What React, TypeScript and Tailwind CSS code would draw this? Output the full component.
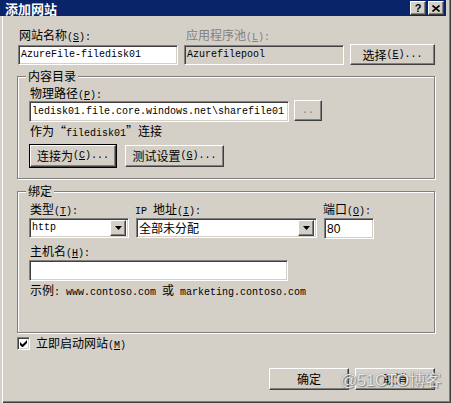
import type { ReactNode } from "react";

const raised =
  "bg-[#d4d0c8] border border-t-white border-l-white border-r-[#404040] border-b-[#404040] shadow-[inset_-1px_-1px_0_#808080]";
const sunken =
  "border border-t-[#808080] border-l-[#808080] border-r-white border-b-white shadow-[inset_1px_1px_0_#404040,inset_-1px_-1px_0_#d4d0c8]";
const etched =
  "relative border border-[#808080] shadow-[inset_1px_1px_0_#ffffff,1px_1px_0_#ffffff]";

function Lat({ children, className = "" }: { children: ReactNode; className?: string }) {
  return (
    <span className={"font-['Liberation_Mono',monospace] text-[10px] leading-[8px] " + className}>
      {children}
    </span>
  );
}

// label with an underlined access key, e.g. 网站名称(S):
function Acc({ text, k, tail = ":" }: { text: string; k: string; tail?: string }) {
  return (
    <span>
      {text}
      <Lat>
        (<span className="underline">{k}</span>){tail}
      </Lat>
    </span>
  );
}

function Field({
  w,
  h = "h-[20px]",
  disabled = false,
  children,
}: {
  w: string;
  h?: string;
  disabled?: boolean;
  children?: ReactNode;
}) {
  return (
    <div
      className={`${w} ${h} ${sunken} ${
        disabled ? "bg-[#d4d0c8]" : "bg-white"
      } flex items-center overflow-hidden whitespace-nowrap pl-[2px]`}
    >
      {children}
    </div>
  );
}

function Combo({ w, children }: { w: string; children: ReactNode }) {
  return (
    <div className={`${w} h-[20px] ${sunken} flex items-center bg-white pl-[2px] pr-[2px]`}>
      <div className="flex h-[16px] flex-1 items-center overflow-hidden whitespace-nowrap">
        {children}
      </div>
      <div className={`${raised} flex h-[16px] w-[16px] items-center justify-center`}>
        <svg width="7" height="4" viewBox="0 0 7 4">
          <path d="M0 0h7L3.5 4z" fill="#000" />
        </svg>
      </div>
    </div>
  );
}

function Button({
  w,
  children,
  isDefault = false,
}: {
  w: string;
  children: ReactNode;
  isDefault?: boolean;
}) {
  const inner = (
    <div className={`${w} h-[22px] ${raised} flex items-center justify-center whitespace-nowrap`}>
      {children}
    </div>
  );
  if (isDefault) return <div className="border border-black">{inner}</div>;
  return inner;
}

function Group({ title, h, children }: { title: string; h: string; children: ReactNode }) {
  return (
    <div className={`${etched} ${h} w-[418px]`}>
      <span className="absolute left-[8px] top-[-8px] h-[14px] bg-[#d4d0c8] px-[2px]">
        {title}
      </span>
      {children}
    </div>
  );
}

export default function App() {
  return (
    <div className="relative h-[403px] w-[451px] overflow-hidden bg-[#d4d0c8] font-['Noto_Sans_CJK_SC',sans-serif] text-[12px] leading-[14px] text-black shadow-[inset_2px_0_0_#d4d0c8,inset_3px_0_0_#ffffff,inset_-1px_-1px_0_#404040,inset_-2px_-2px_0_#808080]">
      {/* title bar */}
      <div className="flex h-[16px] w-[446px] items-center bg-[#0a246a] pl-[5px] pr-[2px]">
        <span className="flex-1 text-[13px] font-bold leading-[15px] text-white">添加网站</span>
        <div className={`${raised} flex h-[14px] w-[16px] items-center justify-center text-[11px] font-bold leading-none`}>
          <span className="font-['Liberation_Sans',sans-serif]">?</span>
        </div>
        <div className={`${raised} ml-[2px] flex h-[14px] w-[16px] items-center justify-center`}>
          <svg width="8" height="7" viewBox="0 0 8 7">
            <path d="M0.5 0.5l7 6M7.5 0.5l-7 6" stroke="#000" strokeWidth="1.6" />
          </svg>
        </div>
      </div>

      <div className="pl-[17px] pr-[16px]">
        {/* site name / app pool */}
        <div className="mt-[12px] flex h-[14px]">
          <div className="w-[167px] pl-[2px]">
            <Acc text="网站名称" k="S" />
          </div>
          <div className="pl-[2px] text-[#808080]">
            <Acc text="应用程序池" k="L" />
          </div>
        </div>
        <div className="mt-[2px] flex items-end">
          <div className="ml-[1px]">
            <Field w="w-[160px]">
              <Lat>AzureFile-filedisk01</Lat>
            </Field>
          </div>
          <div className="ml-[6px]">
            <Field w="w-[160px]" disabled>
              <Lat>Azurefilepool</Lat>
            </Field>
          </div>
          <div className="ml-[6px]">
            <div className={`${raised} flex h-[21px] w-[85px] items-center justify-center`}>
              选择<Lat>(<span className="underline">E</span>)...</Lat>
            </div>
          </div>
        </div>

        {/* content directory */}
        <div className="mt-[11px]">
          <Group title="内容目录" h="h-[103px]">
            <div className="pl-[11px] pt-[9px]">
              <div className="h-[14px] pl-[1px]">
                <Acc text="物理路径" k="P" />
              </div>
              <div className="mt-[1px] flex items-start">
                <Field w="w-[260px]" h="h-[21px]">
                  <Lat>ledisk01.file.core.windows.net\sharefile01</Lat>
                </Field>
                <div className="-mt-[1px] ml-[5px]">
                  <div className={`${raised} flex h-[21px] w-[28px] items-center justify-center text-[#808080]`}>
                    <Lat>..</Lat>
                  </div>
                </div>
              </div>
              <div className="mt-[2px] h-[14px] pl-[1px]">
                作为“<Lat>filedisk01</Lat>”连接
              </div>
              <div className="mt-[6px] flex items-center">
                <Button w="w-[86px]" isDefault>
                  连接为<Lat>(<span className="underline">C</span>)...</Lat>
                </Button>
                <div className="ml-[8px]">
                  <Button w="w-[99px]">
                    测试设置<Lat>(<span className="underline">G</span>)...</Lat>
                  </Button>
                </div>
              </div>
            </div>
          </Group>
        </div>

        {/* binding */}
        <div className="mt-[12px]">
          <Group title="绑定" h="h-[142px]">
            <div className="pl-[11px] pt-[10px]">
              <div className="flex h-[14px]">
                <div className="w-[106px] pl-[1px]">
                  <Acc text="类型" k="T" />
                </div>
                <div className="w-[188px]">
                  <Lat>IP </Lat>地址<Lat>(<span className="underline">I</span>):</Lat>
                </div>
                <div>
                  <Acc text="端口" k="O" />
                </div>
              </div>
              <div className="mt-[2px] flex">
                <Combo w="w-[100px]">
                  <Lat>http</Lat>
                </Combo>
                <div className="ml-[7px]">
                  <Combo w="w-[181px]">全部未分配</Combo>
                </div>
                <div className="ml-[7px]">
                  <Field w="w-[50px]" h="h-[21px]">
                    <span className="font-['Liberation_Sans',sans-serif] text-[12px]">80</span>
                  </Field>
                </div>
              </div>
              <div className="mt-[5px] h-[14px] pl-[1px]">
                <Acc text="主机名" k="H" />
              </div>
              <div className="mt-[2px]">
                <Field w="w-[259px]" h="h-[21px]" />
              </div>
              <div className="mt-[2px] h-[14px] pl-[1px]">
                示例<Lat>: www.contoso.com </Lat>或<Lat> marketing.contoso.com</Lat>
              </div>
            </div>
          </Group>
        </div>

        {/* start immediately */}
        <div className="mt-[3px] flex h-[14px] items-center">
          <div className={`${sunken} flex h-[13px] w-[13px] items-center justify-center bg-white`}>
            <svg width="7" height="7" viewBox="0 0 7 7">
              <path d="M0 2v3l2 2h1l4-4V0L2.5 4.5z" fill="#000" />
            </svg>
          </div>
          <span className="ml-[6px]">
            立即启动网站<Lat>(<span className="underline">M</span>)</Lat>
          </span>
        </div>

        {/* ok / cancel */}
        <div className="mt-[18px] flex justify-end gap-[6px]">
          <Button w="w-[80px]">确定</Button>
          <Button w="w-[80px]">取消</Button>
        </div>
      </div>

      <span className="pointer-events-none absolute left-[340px] top-[370px] whitespace-nowrap font-['Liberation_Sans',sans-serif] text-[17px] leading-[22px] tracking-[-0.5px] text-white/85 [text-shadow:0_0_1px_#555,1px_1px_1px_#888]">
        @51CTO博客
      </span>
    </div>
  );
}
